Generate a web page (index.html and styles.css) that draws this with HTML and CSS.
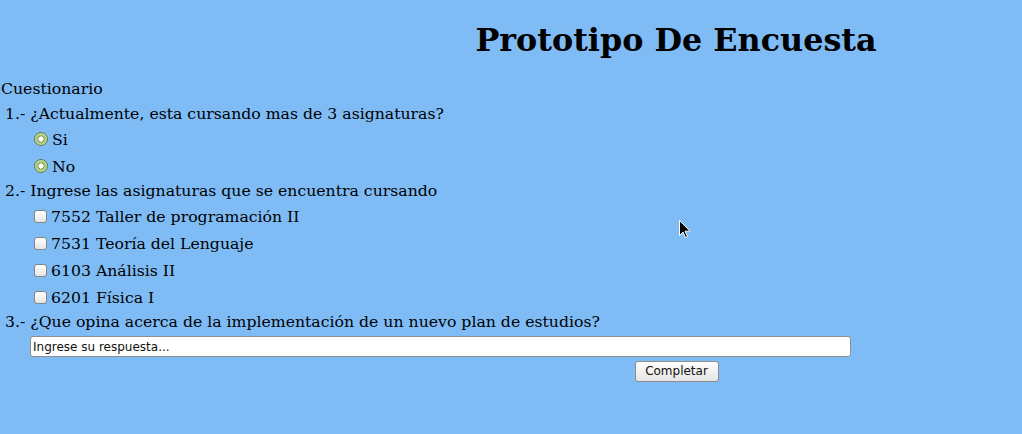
FILE: index.html
```html
<!DOCTYPE html>
<html lang="es">
<head>
<meta charset="utf-8">
<title>Prototipo De Encuesta</title>
<link rel="stylesheet" href="styles.css">
</head>
<body>
<div class="page">
  <h1 class="title">Prototipo De Encuesta</h1>
  <form class="survey">
    <div class="caption">Cuestionario</div>
    <div class="question">1.- ¿Actualmente, esta cursando mas de 3 asignaturas?</div>
    <label class="option"><input type="radio" name="q1" class="radio"><span>Si</span></label>
    <label class="option"><input type="radio" name="q1b" class="radio"><span>No</span></label>
    <div class="question">2.- Ingrese las asignaturas que se encuentra cursando</div>
    <label class="option"><input type="checkbox" class="check"><span>7552 Taller de programación II</span></label>
    <label class="option"><input type="checkbox" class="check"><span>7531 Teoría del Lenguaje</span></label>
    <label class="option"><input type="checkbox" class="check"><span>6103 Análisis II</span></label>
    <label class="option"><input type="checkbox" class="check"><span>6201 Física I</span></label>
    <div class="question">3.- ¿Que opina acerca de la implementación de un nuevo plan de estudios?</div>
    <div class="answer-row"><input type="text" class="answer" value="Ingrese su respuesta..."></div>
    <div class="submit-row"><button type="button" class="submit">Completar</button></div>
  </form>
  <svg class="cursor" width="12" height="19" viewBox="0 0 12 19"><path d="M0.5 0.5 L0.5 15.5 L4 12 L6.5 17.5 L8.5 16.5 L6 11.2 L11 11.2 Z" fill="#000" stroke="#fff" stroke-width="1"/></svg>
</div>
</body>
</html>
```
FILE: styles.css
```css
html, body {
  margin: 0;
  padding: 0;
  background: #7fbcf6;
}
body {
  font-family: "DejaVu Serif", serif;
  font-size: 15.7px;
  color: #000;
}
.page {
  position: relative;
  width: 1022px;
  height: 434px;
}
.title {
  margin: 0;
  padding: 21px 0 0 330px;
  height: 56px;
  box-sizing: border-box;
  text-align: center;
  font-size: 31.8px;
  font-weight: bold;
  line-height: 37px;
}
.survey {
  display: flex;
  flex-direction: column;
  padding-left: 1px;
  padding-top: 21px;
}
.caption {
  height: 25px;
  line-height: 23px;
}
.question {
  height: 23px;
  line-height: 23px;
  padding-left: 4px;
}
.option {
  display: flex;
  align-items: center;
  height: 23px;
  padding: 3px 0 1px 33px;
}
.option span {
  line-height: 23px;
}
.radio, .check {
  appearance: none;
  -webkit-appearance: none;
  margin: 0 4px 0 0;
  flex: none;
  box-sizing: border-box;
}
.radio {
  width: 14px;
  height: 14px;
  border-radius: 50%;
  border: 1px solid #5f7a48;
  background: radial-gradient(circle, #ffffff 0 2.3px, #7f9e58 2.9px, #9fbf72 3.6px, #c2dc98 5.5px);
  position: relative;
  top: -1px;
}
.check {
  width: 13px;
  height: 13px;
  border-radius: 3px;
  border: 1px solid #858585;
  background: linear-gradient(#ffffff, #e6e6e6);
}
.answer-row {
  padding-left: 29px;
  padding-top: 3px;
  height: 27px;
  box-sizing: border-box;
}
.answer {
  display: block;
  width: 821px;
  height: 21px;
  box-sizing: border-box;
  border: 1px solid #8e8e8e;
  border-radius: 3px;
  padding: 0 2px;
  font-family: "DejaVu Sans", sans-serif;
  font-size: 12px;
  color: #111;
  background: #fff;
  margin: 0;
}
.submit-row {
  padding-left: 330px;
  text-align: center;
}
.submit {
  width: 84px;
  height: 21px;
  box-sizing: border-box;
  border: 1px solid #8e8e8e;
  border-radius: 3px;
  background: linear-gradient(#ffffff, #e4e4e4);
  font-family: "DejaVu Sans", sans-serif;
  font-size: 12px;
  color: #111;
  padding: 0;
  margin: 0;
}
.cursor {
  position: absolute;
  left: 679px;
  top: 220px;
}
```
